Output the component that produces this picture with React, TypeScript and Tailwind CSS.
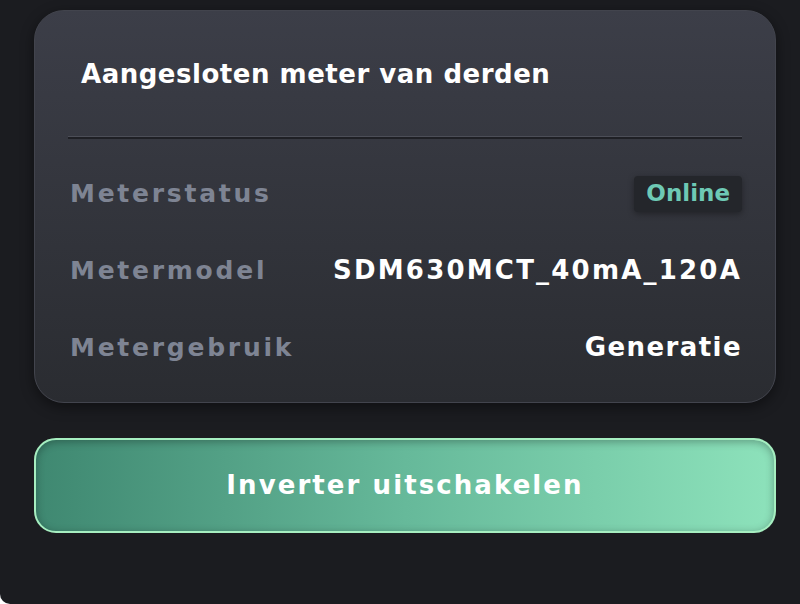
import React from 'react';

const rows = [
  { label: 'Meterstatus', value: 'Online', badge: true, tracking: '' },
  { label: 'Metermodel', value: 'SDM630MCT_40mA_120A', tracking: 'tracking-[0.085em]' },
  { label: 'Metergebruik', value: 'Generatie', tracking: 'tracking-[0.055em]' },
];

const App = () => {
  return (
    <div className="w-[800px] h-[604px] bg-white overflow-hidden">
      <div
        className="h-full bg-[#1b1c20] rounded-bl-[10px] pl-[34px] pr-[24px] pt-[10px]"
        style={{ fontFamily: '"DejaVu Sans", "Liberation Sans", sans-serif' }}
      >
        <div className="rounded-[30px] border border-[#42444d] bg-gradient-to-b from-[#3c3e48] to-[#2a2c31] shadow-[0_4px_14px_rgba(0,0,0,0.45)] px-[33px] pt-[47px] pb-[16px]">
          <h2 className="pl-[13px] text-[26px] leading-[32px] font-bold text-white tracking-[0.02em]">
            Aangesloten meter van derden
          </h2>
          <div className="mt-[46px] h-[3px] bg-[#1f2025] border-t border-[#4c4e57]" />
          <div className="mt-[16px] flex flex-col">
            {rows.map((row) => (
              <div key={row.label} className="h-[77px] flex items-center justify-between pl-[2px]">
                <span className="text-[25px] font-bold text-[#7e8493] tracking-[0.11em]">
                  {row.label}
                </span>
                {row.badge ? (
                  <span className="h-[36px] px-[12px] flex items-center rounded-[4px] bg-[#24262b] text-[23px] font-bold text-[#6ec9b5] shadow-[0_2px_6px_rgba(0,0,0,0.35)]">
                    {row.value}
                  </span>
                ) : (
                  <span className={`text-[26px] font-bold text-white ${row.tracking}`}>
                    {row.value}
                  </span>
                )}
              </div>
            ))}
          </div>
        </div>

        <button
          type="button"
          className="mt-[35px] w-full h-[95px] rounded-[22px] border-2 border-[#a6eec0] bg-gradient-to-r from-[#3f8871] via-[#66b99a] to-[#8de2bb] shadow-[inset_0_2px_8px_rgba(0,0,0,0.3)] text-[26px] font-bold text-white tracking-[0.08em]"
        >
          Inverter uitschakelen
        </button>
      </div>
    </div>
  );
};

export default App;
